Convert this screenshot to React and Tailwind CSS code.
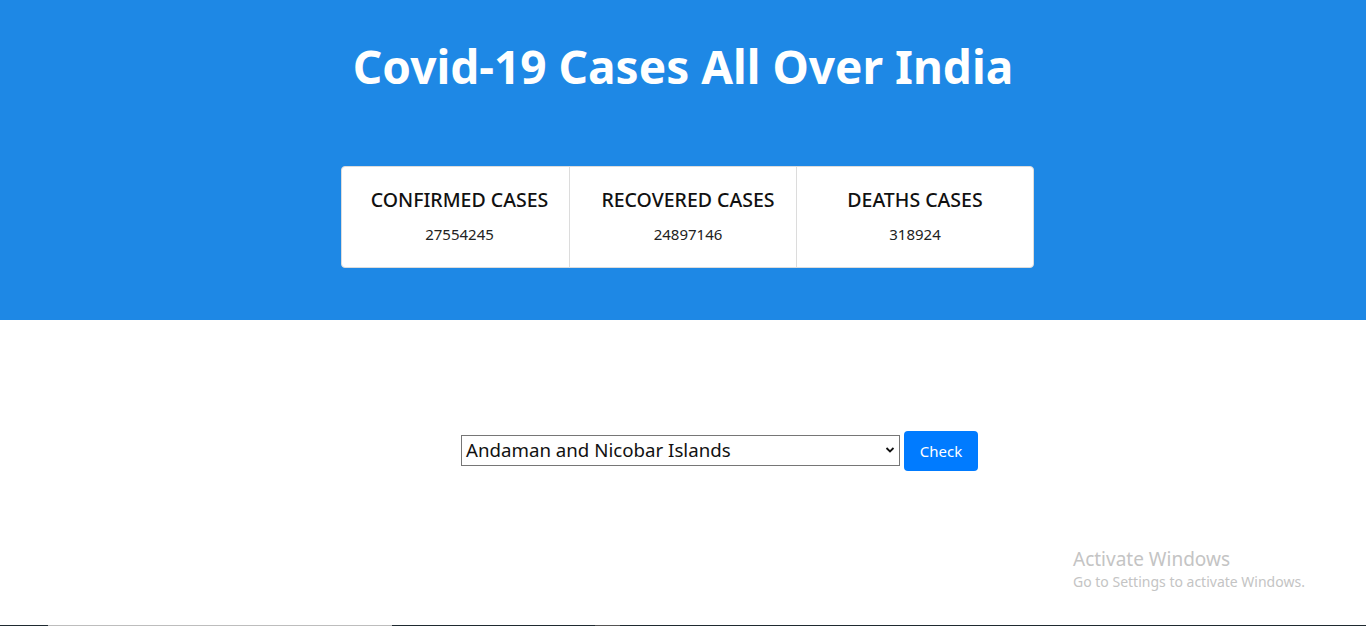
export default function App() {
  const stats = [
    { label: "CONFIRMED CASES", value: "27554245", w: "w-[227px]", p: "pl-[8px]" },
    { label: "RECOVERED CASES", value: "24897146", w: "w-[227px]", p: "pl-[10px]" },
    { label: "DEATHS CASES", value: "318924", w: "w-[237px]", p: "pl-0" },
  ];
  return (
    <div className="relative h-[626px] w-[1366px] overflow-hidden bg-white" style={{ fontFamily: '"Noto Sans", "Open Sans", sans-serif' }}>
      <div className="flex h-[320px] flex-col items-center bg-[#1e88e5] pt-[35px]">
        <h1 className="text-[46px] font-bold leading-[62px] text-white">Covid-19 Cases All Over India</h1>
        <div className="ml-[9px] mt-[69px] flex h-[102px] rounded-[4px] border border-[#dcdcdc] bg-white">
          {stats.map((s, i) => (
            <div key={s.label} className={`${s.w} ${s.p} flex flex-col items-center pt-[19px] ${i > 0 ? "border-l border-[#dcdcdc]" : ""}`}>
              <div className="text-[19.5px] font-medium leading-[28px] text-[#111]">{s.label}</div>
              <div className="mt-[9px] text-[15px] leading-[22px] text-[#222]">{s.value}</div>
            </div>
          ))}
        </div>
      </div>
      <div className="flex items-center justify-center gap-[4px] pl-[73px] pt-[111px]">
        <div className="relative mb-[2px] flex h-[31px] w-[439px] items-center border border-[#767676] pl-[4px] text-[18.7px] text-[#111]">
          <span>Andaman and Nicobar Islands</span>
          <svg className="absolute right-[4px] top-[10px]" width="10" height="8" viewBox="0 0 10 8">
            <path d="M1.5 2 L5 5.5 L8.5 2" fill="none" stroke="#111" strokeWidth="1.8" />
          </svg>
        </div>
        <button className="h-[40px] w-[74px] rounded-[4px] bg-[#007bff] text-[15px] text-white">Check</button>
      </div>
      <div className="absolute left-[1073px] top-[546px] text-[#c4c4c4]">
        <div className="text-[19px] leading-[26px]">Activate Windows</div>
        <div className="text-[14px] leading-[20px]">Go to Settings to activate Windows.</div>
      </div>
      <div className="absolute bottom-0 left-0 flex h-[1px] w-full">
        <div className="w-[48px] bg-[#1f2a30]" />
        <div className="w-[344px] bg-[#bdbdbd]" />
        <div className="w-[203px] bg-[#1f2a30]" />
        <div className="w-[25px] bg-[#555]" />
        <div className="flex-1 bg-[#1f2a30]" />
      </div>
    </div>
  );
}
